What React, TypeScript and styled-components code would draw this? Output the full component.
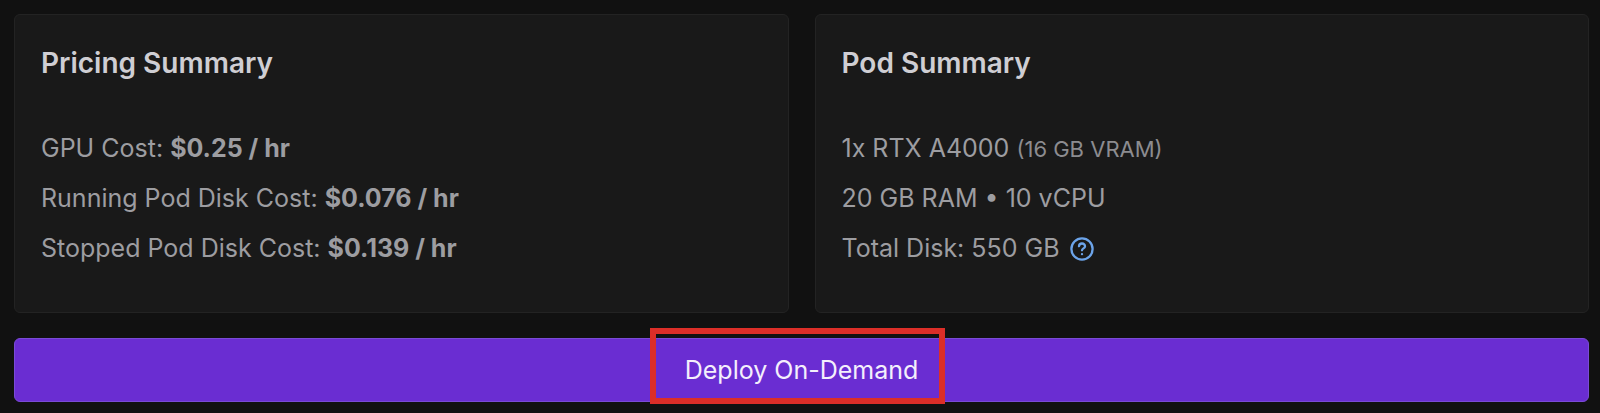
import React from 'react';
import styled, { createGlobalStyle } from 'styled-components';

const Global = createGlobalStyle`
  * { box-sizing: border-box; }
  body { margin: 0; background: #111111; font-family: Inter, sans-serif; color: #9d9da1; }
  h2, p { margin: 0; }
`;
const Page = styled.main`
  display: flex;
  flex-direction: column;
  gap: 25px;
  padding: 14px 11px 11px 14px;
`;
const Cards = styled.div`
  display: grid;
  grid-template-columns: 1fr 1fr;
  gap: 26px;
`;
const Card = styled.section`
  padding: 25px 26px 39px;
  background: #191919;
  border: 1px solid #232323;
  border-radius: 6px;
`;
const Title = styled.h2`
  margin-bottom: 37px;
  font-size: 28px;
  line-height: 46px;
  font-weight: 600;
  color: #cfced3;
`;
const Line = styled.p`
  font-size: 25px;
  line-height: 50px;
`;
const Value = styled.strong`
  font-weight: 700;
`;
const Note = styled.span`
  font-size: 22px;
  line-height: 1;
  color: #8c8c90;
`;
const Help = styled.button`
  display: inline-flex;
  margin-left: 3px;
  padding: 0;
  border: 0;
  background: none;
  color: #6ca4ea;
  vertical-align: -4px;
`;
const Deploy = styled.button`
  display: flex;
  justify-content: center;
  padding: 0;
  border: 1px solid #7a4bd6;
  border-radius: 6px;
  background: #6a2dd2;
  color: #f4effc;
  font: 400 25px Inter, sans-serif;
`;
const DeployLabel = styled.span`
  position: relative;
  line-height: 62px;
`;
const Highlight = styled.span`
  position: absolute;
  inset: -11px -27px -3px -35px;
  border: 6px solid #dc2e28;
`;

const costs = [
  ['GPU Cost:', '$0.25 / hr'],
  ['Running Pod Disk Cost:', '$0.076 / hr'],
  ['Stopped Pod Disk Cost:', '$0.139 / hr'],
];

export default function App() {
  return (
    <Page>
      <Global />
      <Cards>
        <Card>
          <Title>Pricing Summary</Title>
          {costs.map(([label, value]) => (
            <Line key={label}>{label} <Value>{value}</Value></Line>
          ))}
        </Card>
        <Card>
          <Title>Pod Summary</Title>
          <Line>1x RTX A4000 <Note>(16 GB VRAM)</Note></Line>
          <Line>20 GB RAM • 10 vCPU</Line>
          <Line>
            Total Disk: 550 GB{' '}
            <Help type="button" aria-label="About total disk">
              <svg width="24" height="24" viewBox="0 0 24 24" fill="none" stroke="currentColor" strokeWidth="2.3" strokeLinecap="round" strokeLinejoin="round">
                <circle cx="12" cy="12" r="10.6" />
                <path d="M9 9.2a3 2.8 0 0 1 6 .2c0 1.9-3 2.1-3 3.9" />
                <path d="M12 17.2h.01" />
              </svg>
            </Help>
          </Line>
        </Card>
      </Cards>
      <Deploy type="button">
        <DeployLabel>Deploy On-Demand<Highlight /></DeployLabel>
      </Deploy>
    </Page>
  );
}
